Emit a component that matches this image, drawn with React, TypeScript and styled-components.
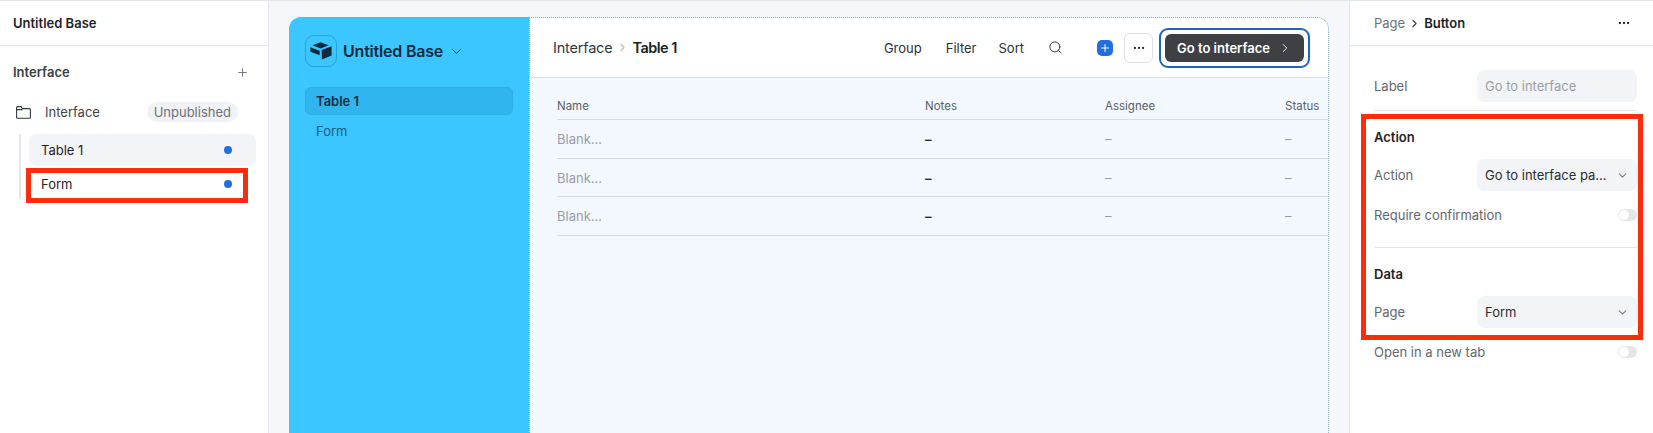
import React from "react";
import styled, { createGlobalStyle } from "styled-components";
import { ChevronDown, ChevronRight, MoreHorizontal, Plus, Search } from "lucide-react";

const GlobalStyle = createGlobalStyle`
  html, body {
    margin: 0;
    padding: 0;
    height: 100%;
    overflow: hidden;
    background: #ffffff;
  }
  * {
    box-sizing: border-box;
  }
`;

const Page = styled.div`
  position: relative;
  display: flex;
  width: 1653px;
  height: 433px;
  overflow: hidden;
  border-top: 1px solid #e3e5ea;
  font-family: Inter, "Liberation Sans", sans-serif;
  font-size: 13px;
  color: #1f2329;
`;

const LeftPanel = styled.aside`
  width: 269px;
  flex-shrink: 0;
  background: #fff;
  border-right: 1px solid #e3e5ea;
`;

const PanelHeader = styled.div`
  height: 45px;
  display: flex;
  align-items: center;
  padding: 0 13px;
  font-weight: 600;
  border-bottom: 1px solid #e3e5ea;
`;

const SectionRow = styled.div`
  display: flex;
  justify-content: space-between;
  align-items: center;
  height: 20px;
  margin: 16px 19px 0 13px;
  font-weight: 600;
  color: #3a3e46;
`;

const FolderRow = styled.div`
  display: flex;
  align-items: center;
  height: 22px;
  margin: 19px 30px 0 16px;
  color: #3f434b;
`;

const FolderName = styled.span`
  margin-left: 14px;
  flex: 1;
`;

const Pill = styled.span`
  height: 20px;
  padding: 0 7px;
  display: flex;
  align-items: center;
  border-radius: 10px;
  background: #f1f2f5;
  color: #6d717a;
`;

const Tree = styled.div`
  margin: 11px 12px 0 19px;
  padding-left: 10px;
  position: relative;
  &::before {
    content: "";
    position: absolute;
    left: 0;
    top: 0;
    bottom: 2px;
    width: 2px;
    background: #e3e5ea;
  }
`;

const TreeItem = styled.div<{ $active?: boolean }>`
  display: flex;
  justify-content: space-between;
  align-items: center;
  height: ${(p) => (p.$active ? "32px" : "34px")};
  margin-bottom: 1px;
  padding: 0 24px 0 12px;
  border-radius: 7px;
  background: ${(p) => (p.$active ? "#f3f4f8" : "transparent")};
`;

const Dot = styled.span`
  width: 8px;
  height: 8px;
  border-radius: 50%;
  background: #1f6fe0;
`;

const Center = styled.main`
  flex: 1;
  padding: 16px 20px 0 20px;
  background: #f5f7fb;
  overflow: hidden;
`;

const Card = styled.div`
  display: flex;
  height: 440px;
  border-radius: 12px;
`;

const AppSidebar = styled.nav`
  width: 240px;
  flex-shrink: 0;
  padding: 18px 16px;
  background: #3bc6ff;
  border-radius: 12px 0 0 0;
`;

const Brand = styled.div`
  display: flex;
  align-items: center;
  gap: 6px;
  height: 32px;
  margin-bottom: 20px;
  font-size: 16px;
  font-weight: 600;
  letter-spacing: -0.2px;
  color: #0f2a3d;
`;

const LogoBox = styled.div`
  width: 32px;
  height: 32px;
  display: flex;
  align-items: center;
  justify-content: center;
  border: 1px solid #26a3da;
  border-radius: 9px;
`;

const NavItem = styled.div<{ $active?: boolean }>`
  display: flex;
  align-items: center;
  height: 28px;
  margin-bottom: 2px;
  padding: 0 10px;
  border-radius: 6px;
  background: ${(p) => (p.$active ? "#31b5ee" : "transparent")};
  border: 1px solid ${(p) => (p.$active ? "#2eafe6" : "transparent")};
  font-weight: ${(p) => (p.$active ? 600 : 400)};
  color: ${(p) => (p.$active ? "#0f2f45" : "#175a80")};
`;

const MainArea = styled.section`
  flex: 1;
  min-width: 0;
  background: #f3f7fe;
  border: 1px dotted #7fa6cc;
  border-bottom: none;
  border-radius: 0 12px 0 0;
`;

const MainBar = styled.div`
  height: 60px;
  display: flex;
  align-items: center;
  padding: 0 18px 0 23px;
  background: #fff;
  border-bottom: 1px solid #d9dde4;
  border-radius: 0 12px 0 0;
`;

const Crumb = styled.span`
  font-size: 14.5px;
  color: #33373e;
  letter-spacing: -0.2px;
`;

const CrumbArrow = styled.span`
  display: flex;
  margin: 0 3px 0 4px;
  color: #b8bbc2;
`;

const CrumbCurrent = styled(Crumb)`
  font-weight: 600;
  color: #1c1f24;
  letter-spacing: -0.5px;
`;

const Spacer = styled.div`
  flex: 1;
`;

const BarAction = styled.span<{ $gap: number }>`
  margin-right: ${(p) => p.$gap}px;
  color: #2c3036;
`;

const AddButton = styled.div`
  width: 16px;
  height: 16px;
  display: flex;
  align-items: center;
  justify-content: center;
  margin: 0 11px 0 34px;
  border-radius: 5px;
  background: #1f6fe0;
  color: #fff;
`;

const MoreButton = styled.div`
  width: 29px;
  height: 30px;
  display: flex;
  align-items: center;
  justify-content: center;
  border: 1px solid #dfe1e6;
  border-radius: 6px;
  background: #fff;
`;

const GoOutline = styled.div`
  margin-left: 6px;
  padding: 4px;
  border: 2px solid #1f66b8;
  border-radius: 9px;
  background: #fff;
`;

const GoButton = styled.div`
  width: 139px;
  height: 28px;
  display: flex;
  align-items: center;
  justify-content: space-between;
  padding: 0 12px;
  border-radius: 6px;
  background: #3f4044;
  color: #fff;
  font-weight: 600;
`;

const TableBody = styled.div`
  margin: 19px 0 0 27px;
  overflow: hidden;
`;

const TableRow = styled.div<{ $head?: boolean }>`
  display: grid;
  grid-template-columns: 368px 180px 180px 60px;
  align-items: center;
  height: ${(p) => (p.$head ? "23px" : "38.7px")};
  padding-bottom: ${(p) => (p.$head ? "4px" : "0")};
  border-bottom: 1px solid #d7dbe2;
  color: ${(p) => (p.$head ? "#5a5f68" : "#9a9ea6")};
  font-size: ${(p) => (p.$head ? "11.5px" : "13px")};
`;

const NoteDash = styled.span`
  color: #24272c;
  font-weight: 600;
`;

const RightPanel = styled.aside`
  width: 304px;
  flex-shrink: 0;
  background: #fff;
  border-left: 1px solid #e3e5ea;
`;

const RightHeader = styled(PanelHeader)`
  justify-content: space-between;
  padding: 0 22px 0 24px;
`;

const Trail = styled.span`
  display: flex;
  align-items: center;
  gap: 3px;
  font-weight: 400;
  color: #6d717a;
`;

const TrailCurrent = styled.span`
  font-weight: 600;
  color: #1f2329;
`;

const RightBody = styled.div`
  padding: 24px 16px 0 24px;
`;

const FieldRow = styled.div`
  display: flex;
  justify-content: space-between;
  align-items: center;
  height: 32px;
  color: #62666f;
`;

const ToggleRow = styled(FieldRow)<{ $top: number }>`
  height: 16px;
  margin-top: ${(p) => p.$top}px;
`;

const FieldBox = styled.div<{ $muted?: boolean }>`
  width: 160px;
  height: 32px;
  display: flex;
  align-items: center;
  justify-content: space-between;
  padding: 0 8px;
  border-radius: 7px;
  background: #f3f4f8;
  color: ${(p) => (p.$muted ? "#9a9ea6" : "#2a2d33")};
  white-space: nowrap;
`;

const Divider = styled.div<{ $top: number }>`
  height: 1px;
  margin-top: ${(p) => p.$top}px;
  background: #e3e5ea;
`;

const GroupTitle = styled.div<{ $top: number; $bottom: number }>`
  margin-top: ${(p) => p.$top}px;
  margin-bottom: ${(p) => p.$bottom}px;
  line-height: 16px;
  font-weight: 600;
  color: #1f2329;
`;

const Toggle = styled.span`
  position: relative;
  width: 19px;
  height: 12px;
  border-radius: 6px;
  background: #e5e6ea;
  &::after {
    content: "";
    position: absolute;
    left: 1px;
    top: 1px;
    width: 10px;
    height: 10px;
    border-radius: 50%;
    background: #fff;
  }
`;

const Callout = styled.div<{ $x: number; $y: number; $w: number; $h: number }>`
  position: absolute;
  left: ${(p) => p.$x}px;
  top: ${(p) => p.$y}px;
  width: ${(p) => p.$w}px;
  height: ${(p) => p.$h}px;
  border: 5px solid #fb2d0b;
  pointer-events: none;
  z-index: 2;
`;

const rows = [1, 2, 3];

const BaseLogo = () => (
  <svg width="22" height="18" viewBox="0 0 22 18" aria-hidden="true">
    <path d="M10.6 0.3 L18.6 3.3 L10.6 6.4 L2.6 3.3 Z" fill="#0f2a3d" />
    <path d="M11.8 8 L21.6 4.2 V13.6 L11.8 17.6 Z" fill="#0f2a3d" />
    <path d="M0.4 5.2 L9.6 8.8 V13.2 L0.4 9.8 Z" fill="#0f2a3d" />
  </svg>
);

const FolderIcon = () => (
  <svg width="15" height="13" viewBox="0 0 15 13" fill="none" aria-hidden="true">
    <path
      d="M0.6 11.2 V1.6 C0.6 1 1 0.6 1.6 0.6 H5 L6.4 2.6 H13.4 C14 2.6 14.4 3 14.4 3.6 V11.2 C14.4 11.8 14 12.2 13.4 12.2 H1.6 C1 12.2 0.6 11.8 0.6 11.2 Z M0.6 3.6 H6.4"
      stroke="#33373e"
      strokeWidth="1.1"
    />
  </svg>
);

const App = () => {
  return (
    <>
      <GlobalStyle />
      <Page>
        <LeftPanel>
          <PanelHeader>Untitled Base</PanelHeader>
          <SectionRow>
            Interface
            <Plus size={13} color="#777b83" />
          </SectionRow>
          <FolderRow>
            <FolderIcon />
            <FolderName>Interface</FolderName>
            <Pill>Unpublished</Pill>
          </FolderRow>
          <Tree>
            <TreeItem $active>
              Table 1
              <Dot />
            </TreeItem>
            <TreeItem>
              Form
              <Dot />
            </TreeItem>
          </Tree>
        </LeftPanel>

        <Center>
          <Card>
            <AppSidebar>
              <Brand>
                <LogoBox>
                  <BaseLogo />
                </LogoBox>
                Untitled Base
                <ChevronDown size={15} strokeWidth={1.6} />
              </Brand>
              <NavItem $active>Table 1</NavItem>
              <NavItem>Form</NavItem>
            </AppSidebar>
            <MainArea>
              <MainBar>
                <Crumb>Interface</Crumb>
                <CrumbArrow>
                  <ChevronRight size={13} />
                </CrumbArrow>
                <CrumbCurrent>Table 1</CrumbCurrent>
                <Spacer />
                <BarAction $gap={24}>Group</BarAction>
                <BarAction $gap={22}>Filter</BarAction>
                <BarAction $gap={24}>Sort</BarAction>
                <Search size={15} strokeWidth={1.5} color="#2c3036" />
                <AddButton>
                  <Plus size={12} strokeWidth={2} />
                </AddButton>
                <MoreButton>
                  <MoreHorizontal size={14} color="#2c3036" />
                </MoreButton>
                <GoOutline>
                  <GoButton>
                    Go to interface
                    <ChevronRight size={14} strokeWidth={1.5} />
                  </GoButton>
                </GoOutline>
              </MainBar>
              <TableBody>
                <TableRow $head>
                  <span>Name</span>
                  <span>Notes</span>
                  <span>Assignee</span>
                  <span>Status</span>
                </TableRow>
                {rows.map((row) => (
                  <TableRow key={row}>
                    <span>Blank...</span>
                    <NoteDash>–</NoteDash>
                    <span>–</span>
                    <span>–</span>
                  </TableRow>
                ))}
              </TableBody>
            </MainArea>
          </Card>
        </Center>

        <RightPanel>
          <RightHeader>
            <Trail>
              Page
              <ChevronRight size={13} color="#3a3e46" />
              <TrailCurrent>Button</TrailCurrent>
            </Trail>
            <MoreHorizontal size={14} color="#1f2329" />
          </RightHeader>
          <RightBody>
            <FieldRow>
              Label
              <FieldBox $muted>Go to interface</FieldBox>
            </FieldRow>
            <Divider $top={8} />
            <GroupTitle $top={18} $bottom={14}>Action</GroupTitle>
            <FieldRow>
              Action
              <FieldBox>
                Go to interface pa...
                <ChevronDown size={13} color="#7a7e86" />
              </FieldBox>
            </FieldRow>
            <ToggleRow $top={16}>
              Require confirmation
              <Toggle />
            </ToggleRow>
            <Divider $top={24} />
            <GroupTitle $top={18} $bottom={14}>Data</GroupTitle>
            <FieldRow>
              Page
              <FieldBox>
                Form
                <ChevronDown size={13} color="#7a7e86" />
              </FieldBox>
            </FieldRow>
            <ToggleRow $top={16}>
              Open in a new tab
              <Toggle />
            </ToggleRow>
          </RightBody>
        </RightPanel>

        <Callout $x={26} $y={167} $w={222} $h={35} />
        <Callout $x={1361} $y={113} $w={282} $h={226} />
      </Page>
    </>
  );
};

export default App;
